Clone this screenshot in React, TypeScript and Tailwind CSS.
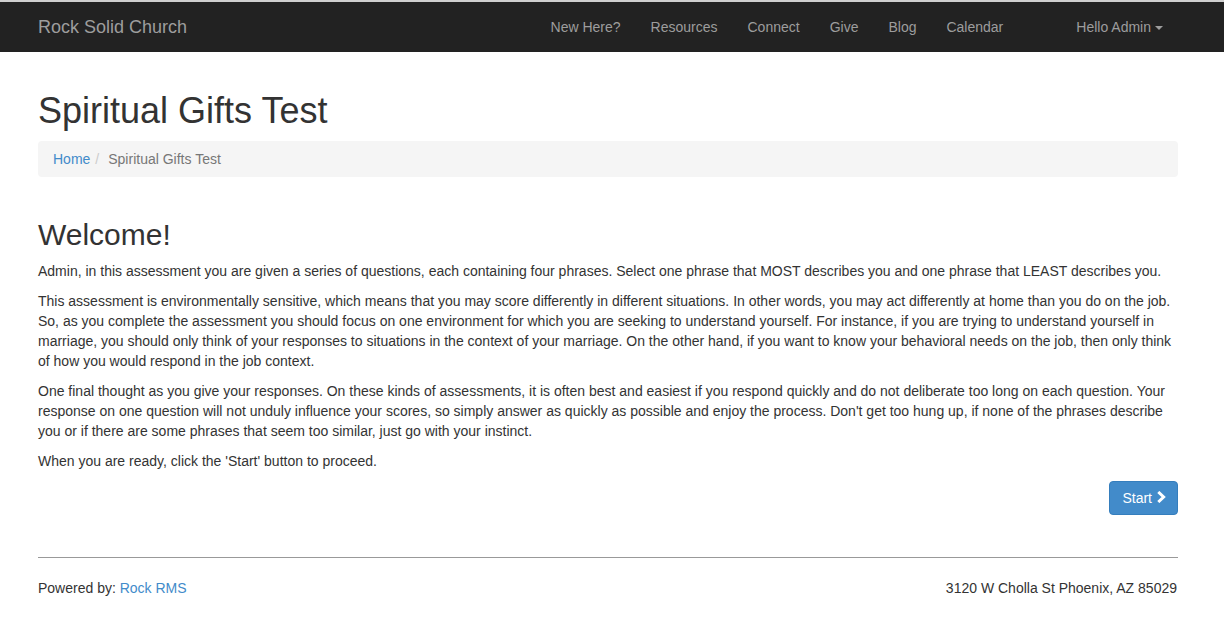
import React from "react";

const navLinks = ["New Here?", "Resources", "Connect", "Give", "Blog", "Calendar"];

function ChevronRight() {
  return (
    <svg width="10" height="12" viewBox="0 0 10 12" className="inline-block ml-[4px] -mt-[1px]">
      <path d="M2.3 1 L7.6 6 L2.3 11" fill="none" stroke="white" strokeWidth="3" />
    </svg>
  );
}

export default function App() {
  return (
    <div className="min-h-[642px] bg-white text-[14px] leading-[20px] text-[#333] font-['Liberation_Sans',Arial,sans-serif]">
      {/* top strip + navbar */}
      <div className="h-[2px] bg-[#cfcfcf]" />
      <nav className="h-[50px] bg-[#222]">
        <div className="h-full flex items-center pl-[38px] w-[1178px]">
          <a className="text-[18px] leading-[20px] text-[#9d9d9d]">Rock Solid Church</a>
          <ul className="ml-auto flex mr-[43px]">
            {navLinks.map((l) => (
              <li key={l} className="px-[15px] py-[15px] text-[#9d9d9d]">
                {l}
              </li>
            ))}
          </ul>
          <div className="px-[15px] py-[15px] text-[#9d9d9d] flex items-center">
            Hello Admin
            <span className="ml-[4px] mt-[1px] inline-block w-0 h-0 border-l-[4px] border-r-[4px] border-t-[4px] border-l-transparent border-r-transparent border-t-[#9d9d9d]" />
          </div>
        </div>
      </nav>

      <main className="pl-[38px] w-[1178px]">
        <h1 className="mt-[39px] mb-[10px] text-[36px] leading-[39.6px] text-[#333]">Spiritual Gifts Test</h1>
        <ol className="flex bg-[#f5f5f5] rounded-[4px] px-[15px] py-[8px]">
          <li className="text-[#428bca]">Home</li>
          <li className="px-[5px] text-[#ccc]">/</li>
          <li className="pl-[4px] text-[#777]">Spiritual Gifts Test</li>
        </ol>

        <h2 className="mt-[41px] mb-[10px] text-[30px] leading-[33px]">Welcome!</h2>
        <p className="mb-[10px]">
          Admin, in this assessment you are given a series of questions, each containing four phrases. Select one phrase that MOST describes you and one phrase that LEAST describes you.
        </p>
        <p className="mb-[10px]">
          This assessment is environmentally sensitive, which means that you may score differently in different situations. In other words, you may act differently at home than you do on the job. So, as you complete the assessment you should focus on one environment for which you are seeking to understand yourself. For instance, if you are trying to understand yourself in marriage, you should only think of your responses to situations in the context of your marriage. On the other hand, if you want to know your behavioral needs on the job, then only think of how you would respond in the job context.
        </p>
        <p className="mb-[10px]">
          One final thought as you give your responses. On these kinds of assessments, it is often best and easiest if you respond quickly and do not deliberate too long on each question. Your response on one question will not unduly influence your scores, so simply answer as quickly as possible and enjoy the process. Don't get too hung up, if none of the phrases describe you or if there are some phrases that seem too similar, just go with your instinct.
        </p>
        <p className="mb-[10px]">When you are ready, click the 'Start' button to proceed.</p>

        <div className="flex justify-end">
          <button className="h-[34px] pl-[12px] pr-[11px] rounded-[4px] bg-[#428bca] border border-[#357ebd] text-white flex items-center">
            Start
            <ChevronRight />
          </button>
        </div>

        <hr className="mt-[42px] border-0 border-t border-[#999]" />

        <footer className="flex justify-between pt-[20px]">
          <p>
            Powered by: <a className="text-[#428bca]">Rock RMS</a>
          </p>
          <p className="pr-[1px]">3120 W Cholla St Phoenix, AZ 85029</p>
        </footer>
      </main>
    </div>
  );
}
